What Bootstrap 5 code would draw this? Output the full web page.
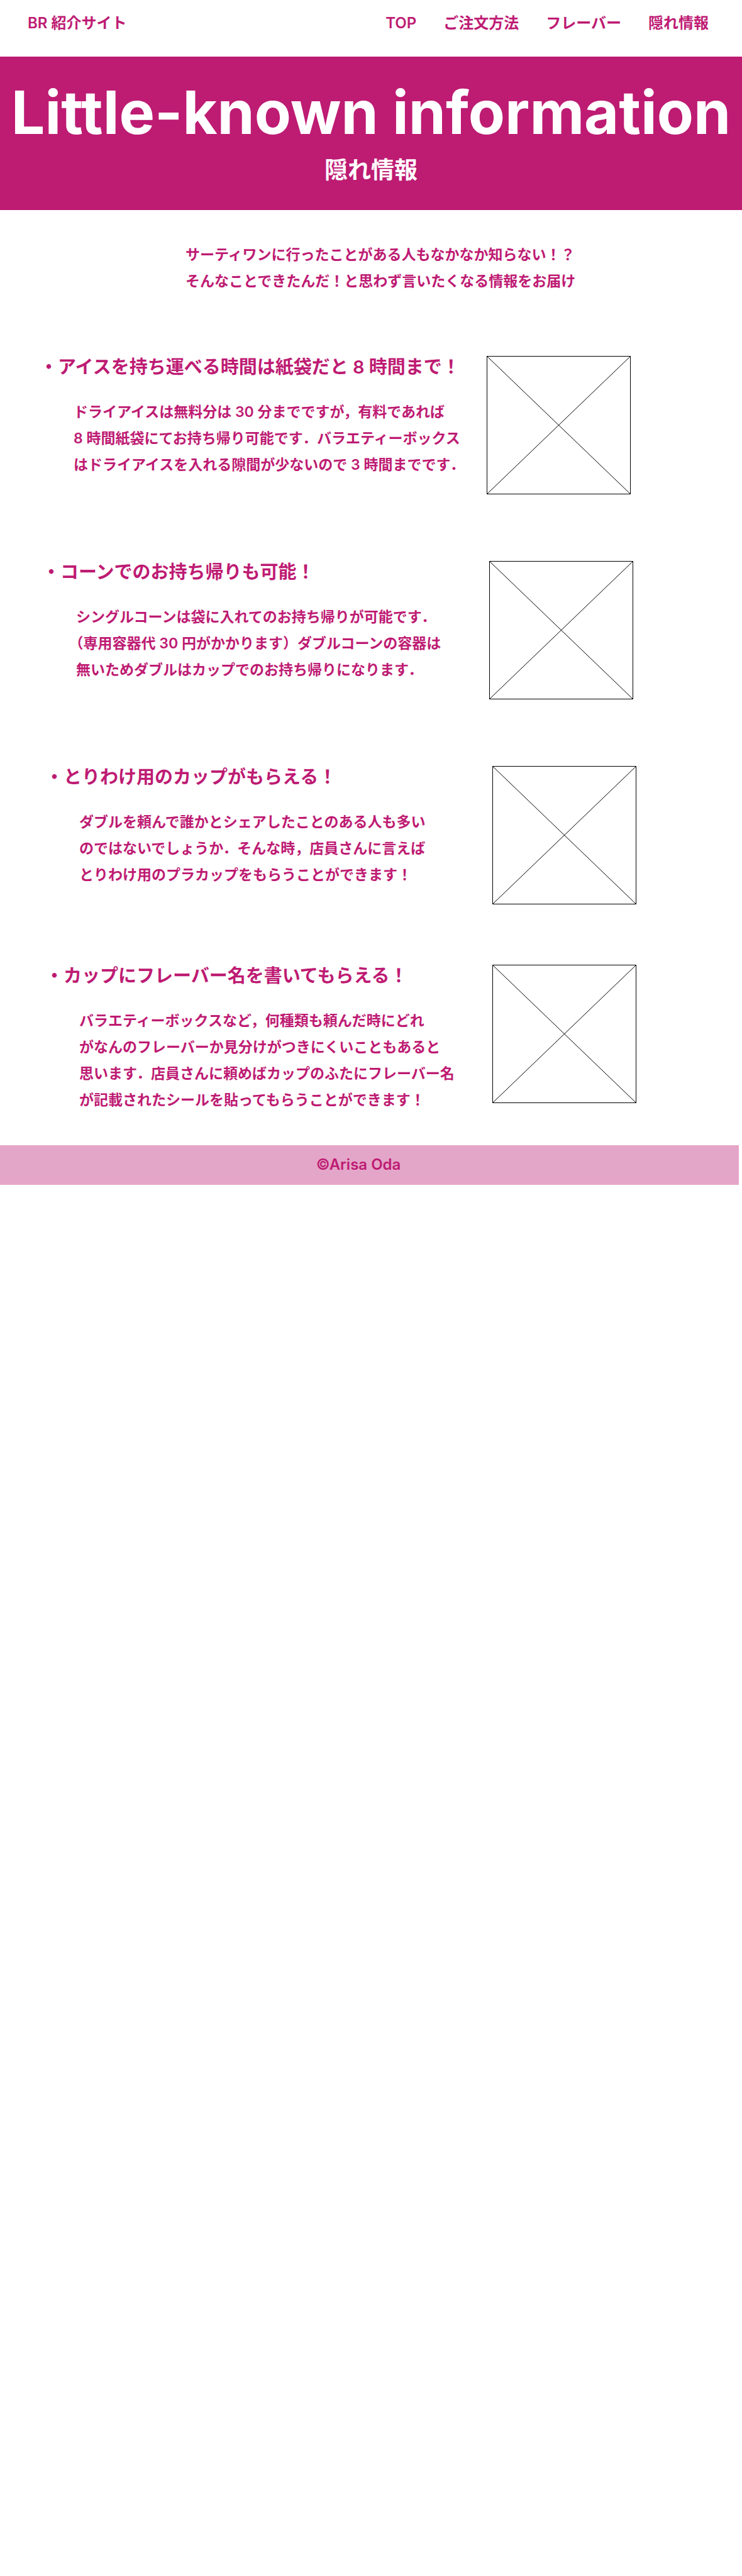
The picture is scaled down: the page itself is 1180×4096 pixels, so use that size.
<!DOCTYPE html>
<html lang="ja">
<head>
<meta charset="utf-8">
<meta name="viewport" content="width=device-width, initial-scale=1">
<title>BR 紹介サイト - 隠れ情報</title>
<link href="https://cdn.jsdelivr.net/npm/bootstrap@5.3.0/dist/css/bootstrap.min.css" rel="stylesheet">
<style>
:root { --berry: #be1b73; --berry-soft: #e4a6c8; }
body { font-family: Inter, "Noto Sans CJK JP", sans-serif; font-size: 23px; line-height: 42px; font-weight: 600; color: var(--berry); background: #fff; }
.site-link { color: inherit; text-decoration: none; white-space: nowrap; }
.site-head { min-height: 90px; padding: 16px 53px 0 44px; font-size: 24px; }
.site-nav { gap: 43px; }
.hero { background: var(--berry); color: #fff; min-height: 244px; padding-top: 24px; }
.hero-title { font-size: 95px; line-height: 130px; font-weight: 700; white-space: nowrap; margin: 0; }
.hero-sub { font-size: 37px; line-height: 54px; margin: 0; }
.intro { padding: 50px 0 98px 25%; margin: 0; }
.topic-list { padding-left: 63px; }
.topic { margin-bottom: 106px; }
.topic-near { margin-bottom: 96px; }
.topic:last-child { margin-bottom: 51px; }
.topic-head { font-size: 29px; line-height: 36px; font-weight: 600; margin: 0 0 32px; }
.topic-copy { width: 711px; flex: none; }
.topic-copy p { margin: 0; padding-left: 54px; white-space: nowrap; text-spacing-trim: trim-start; }
.shift-1 { margin-left: 4px; }
.shift-2 { margin-left: 9px; }
.photo-box { width: 229px; height: 220px; flex: none; }
.site-foot { background: var(--berry-soft); margin-right: 5px; padding: 10px 35px 11px 0; font-size: 24px; }
</style>
<script src="https://cdn.jsdelivr.net/npm/bootstrap@5.3.0/dist/js/bootstrap.bundle.min.js"></script>
</head>
<body>
<header class="site-head d-flex justify-content-between align-items-start">
  <a class="site-link" href="#">BR 紹介サイト</a>
  <nav class="site-nav d-flex">
    <a class="site-link" href="#">TOP</a>
    <a class="site-link" href="#">ご注文方法</a>
    <a class="site-link" href="#">フレーバー</a>
    <a class="site-link" href="#">隠れ情報</a>
  </nav>
</header>
<main>
  <section class="hero text-center">
    <h1 class="hero-title">Little-known information</h1>
    <p class="hero-sub">隠れ情報</p>
  </section>
  <p class="intro">サーティワンに行ったことがある人もなかなか知らない！？<br>そんなことできたんだ！と思わず言いたくなる情報をお届け</p>
  <div class="topic-list d-flex flex-column">
    <article class="topic d-flex align-items-start">
      <div class="topic-copy">
        <h2 class="topic-head">・アイスを持ち運べる時間は紙袋だと 8 時間まで！</h2>
        <p>ドライアイスは無料分は 30 分までですが，有料であれば<br>8 時間紙袋にてお持ち帰り可能です．バラエティーボックス<br>はドライアイスを入れる隙間が少ないので 3 時間までです．</p>
      </div>
      <svg class="photo-box" viewBox="0 0 229 220" fill="none" stroke="#000"><path d="M.5.5h228v219H.5zM.5.5l228 219M228.5.5L.5 219.5"/></svg>
    </article>
    <article class="topic d-flex align-items-start shift-1">
      <div class="topic-copy">
        <h2 class="topic-head">・コーンでのお持ち帰りも可能！</h2>
        <p>シングルコーンは袋に入れてのお持ち帰りが可能です．<br>（専用容器代 30 円がかかります）ダブルコーンの容器は<br>無いためダブルはカップでのお持ち帰りになります．</p>
      </div>
      <svg class="photo-box" viewBox="0 0 229 220" fill="none" stroke="#000"><path d="M.5.5h228v219H.5zM.5.5l228 219M228.5.5L.5 219.5"/></svg>
    </article>
    <article class="topic topic-near d-flex align-items-start shift-2">
      <div class="topic-copy">
        <h2 class="topic-head">・とりわけ用のカップがもらえる！</h2>
        <p>ダブルを頼んで誰かとシェアしたことのある人も多い<br>のではないでしょうか．そんな時，店員さんに言えば<br>とりわけ用のプラカップをもらうことができます！</p>
      </div>
      <svg class="photo-box" viewBox="0 0 229 220" fill="none" stroke="#000"><path d="M.5.5h228v219H.5zM.5.5l228 219M228.5.5L.5 219.5"/></svg>
    </article>
    <article class="topic d-flex align-items-start shift-2">
      <div class="topic-copy">
        <h2 class="topic-head">・カップにフレーバー名を書いてもらえる！</h2>
        <p>バラエティーボックスなど，何種類も頼んだ時にどれ<br>がなんのフレーバーか見分けがつきにくいこともあると<br>思います．店員さんに頼めばカップのふたにフレーバー名<br>が記載されたシールを貼ってもらうことができます！</p>
      </div>
      <svg class="photo-box" viewBox="0 0 229 220" fill="none" stroke="#000"><path d="M.5.5h228v219H.5zM.5.5l228 219M228.5.5L.5 219.5"/></svg>
    </article>
  </div>
</main>
<footer class="site-foot text-center">©Arisa Oda</footer>
</body>
</html>
